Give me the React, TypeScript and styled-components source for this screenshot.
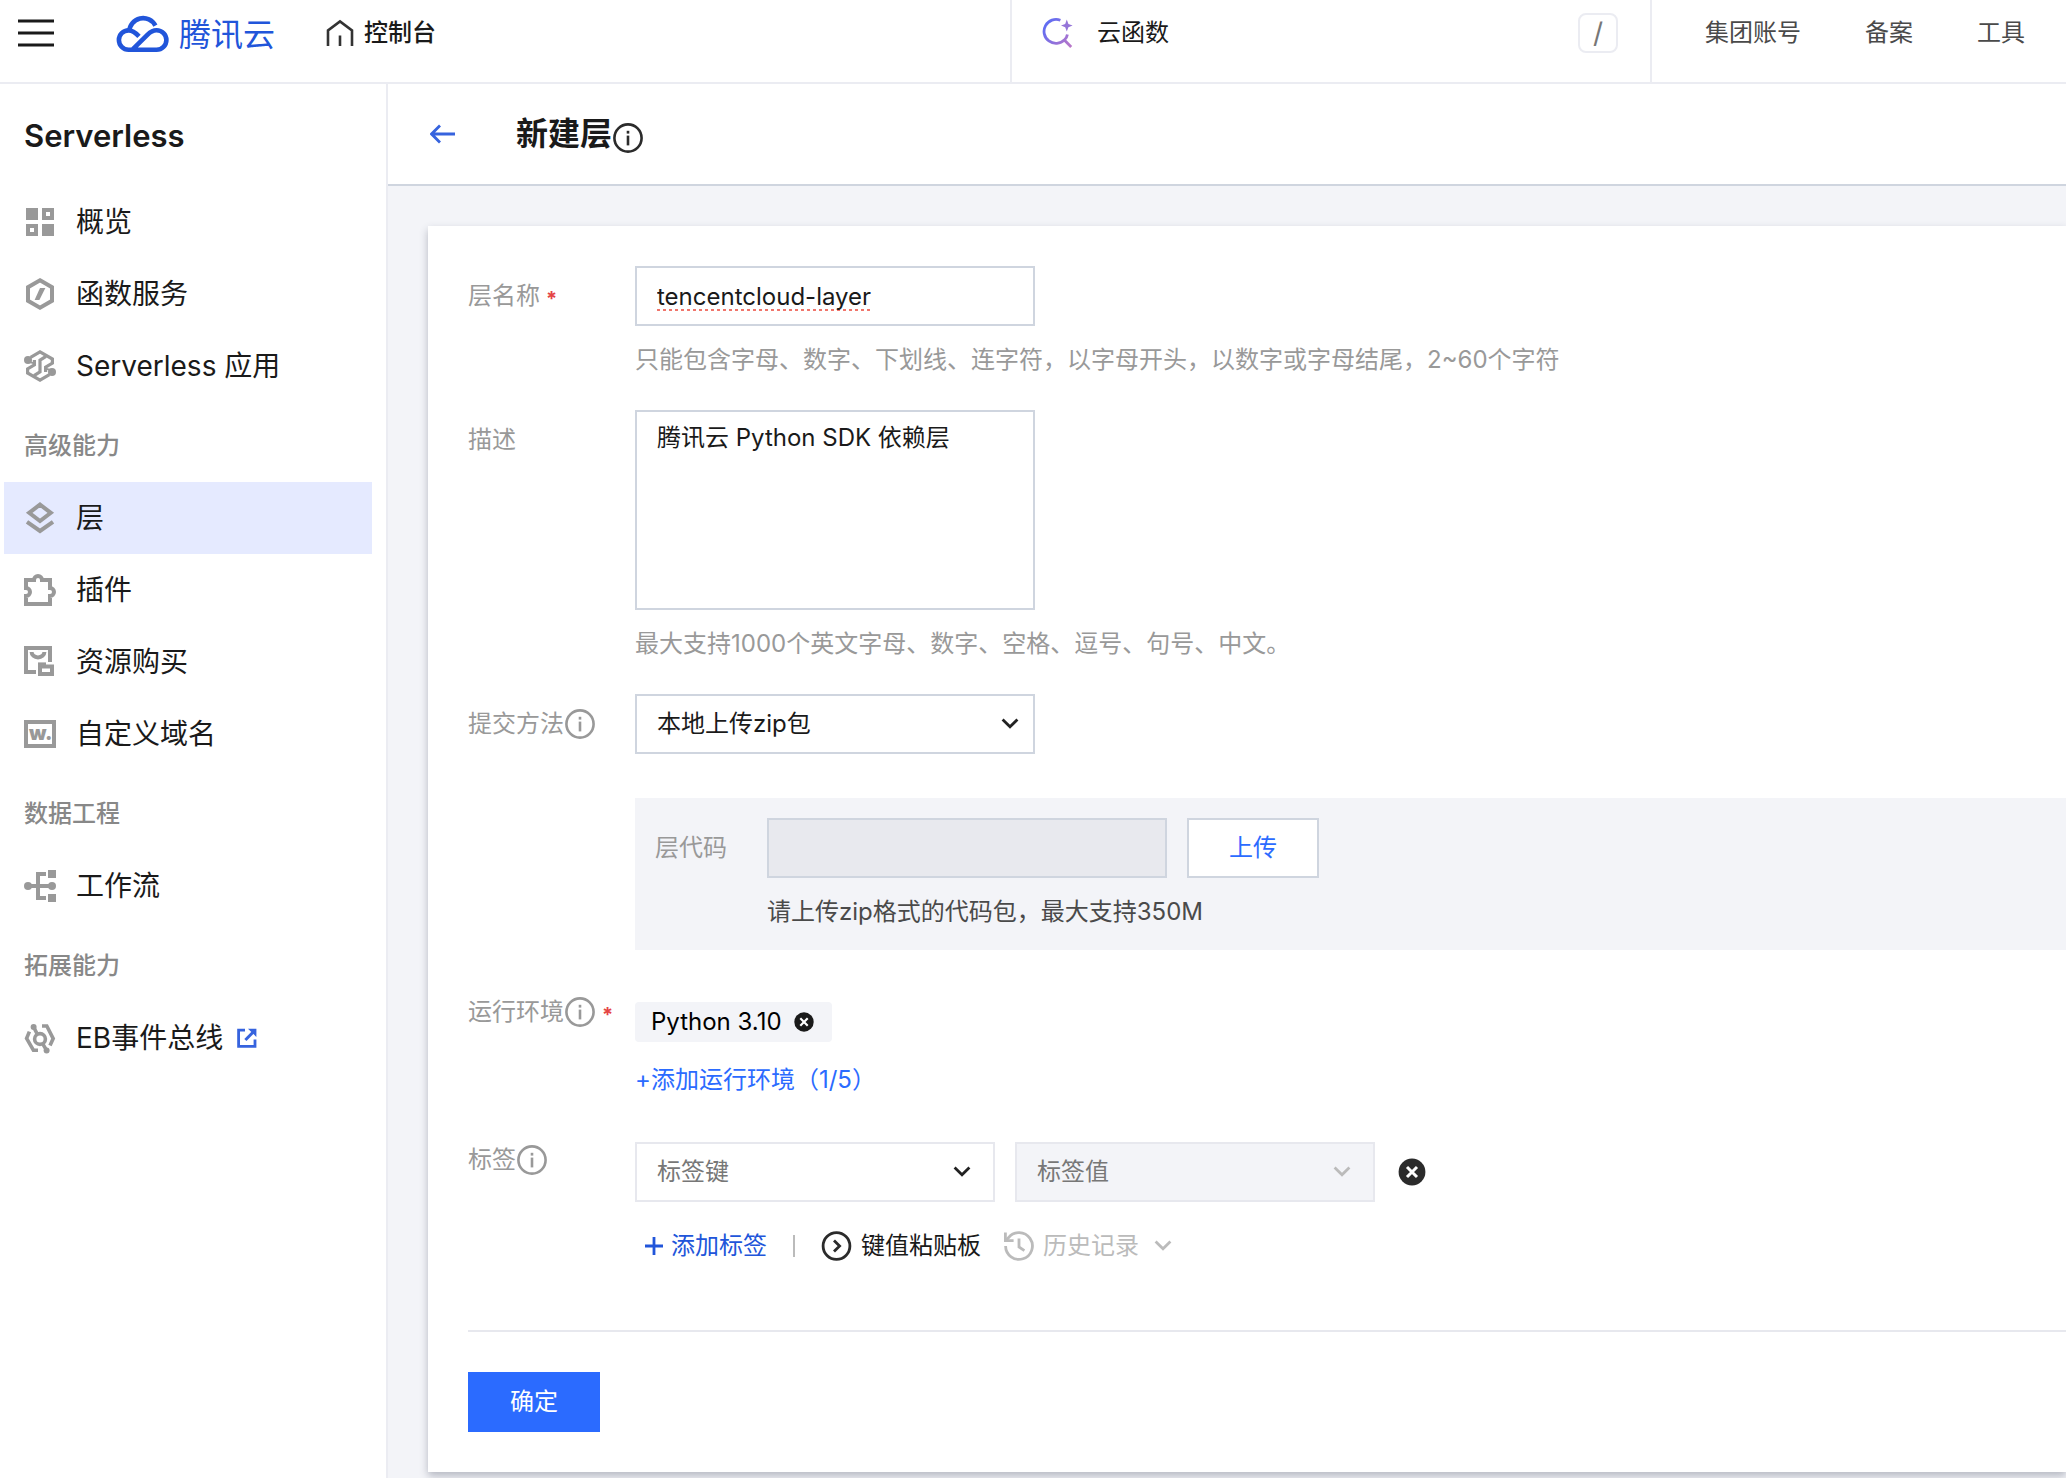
import React, { useState } from 'react';
import styled, { createGlobalStyle, css } from 'styled-components';

const color = {
  ink: '#1a1a1a',
  body: '#4a4a4a',
  label: '#999999',
  group: '#888888',
  faint: '#bbbbbb',
  blue: '#2b6bff',
  deepBlue: '#2155da',
  red: '#e54545',
  line: '#ebecf2',
  border: '#cfd5df',
  softBorder: '#e7e8ee',
  panel: '#f3f4f8',
  active: '#e5eaff',
};

const GlobalStyle = createGlobalStyle`
  * { box-sizing: border-box; }
  body {
    margin: 0;
    background: #fff;
    color: ${color.ink};
    font-family: Inter, "Noto Sans CJK SC", sans-serif;
    font-size: 24px;
    line-height: 36px;
  }
  button, input, select, textarea { font: inherit; color: inherit; margin: 0; }
  svg { display: block; flex: none; }
`;

const Page = styled.div`
  display: flex;
  flex-direction: column;
  min-height: 100vh;
`;

/* ---------- top bar ---------- */

const TopBar = styled.header`
  display: flex;
  height: 84px;
  border-bottom: 2px solid ${color.line};
`;

const Brand = styled.div`
  flex: 1;
  display: flex;
  align-items: center;
  padding: 0 0 16px 18px;
`;

const PlainButton = styled.button`
  display: inline-flex;
  align-items: center;
  padding: 0;
  border: 0;
  background: none;
  cursor: pointer;
`;

const LogoLink = styled.a`
  display: flex;
  align-items: center;
  gap: 9px;
  margin-left: 62px;
  color: ${color.deepBlue};
  font-size: 32px;
  line-height: 40px;
  text-decoration: none;
`;

const LogoText = styled.span`
  padding-top: 3px;
`;

const HomeLink = styled.a`
  display: flex;
  align-items: center;
  gap: 9px;
  margin-left: 50px;
  color: ${color.ink};
  font-weight: 500;
  text-decoration: none;
`;

const Search = styled.label`
  display: flex;
  align-items: center;
  width: 642px;
  padding: 0 32px 16px 30px;
  border: solid ${color.line};
  border-width: 0 2px;
`;

const SearchInput = styled.input`
  flex: 1;
  min-width: 0;
  margin-left: 23px;
  padding: 0;
  border: 0;
  outline: 0;
  background: none;
  &::placeholder { color: ${color.ink}; opacity: 1; }
`;

const KeyHint = styled.kbd`
  display: flex;
  align-items: center;
  justify-content: center;
  width: 40px;
  height: 40px;
  border: 2px solid ${color.line};
  border-radius: 8px;
  color: #777;
  font-family: inherit;
  font-size: 28px;
`;

const TopNav = styled.nav`
  display: flex;
  align-items: center;
  gap: 64px;
  padding: 0 41px 16px 53px;
`;

const TopLink = styled.a`
  color: ${color.body};
  text-decoration: none;
  white-space: nowrap;
`;

/* ---------- side bar ---------- */

const Body = styled.div`
  flex: 1;
  display: flex;
`;

const Sidebar = styled.aside`
  flex: none;
  width: 388px;
  border-right: 2px solid ${color.line};
`;

const SideTitle = styled.h2`
  margin: 0;
  padding: 32px 24px 30px;
  font-size: 31px;
  font-weight: 600;
  line-height: 40px;
`;

const SideGroup = styled.h3`
  margin: 0;
  padding: 26px 24px 18px;
  color: ${color.group};
  font-size: 24px;
  font-weight: 500;
  line-height: 36px;
`;

const SideLink = styled.a<{ $active?: boolean }>`
  display: flex;
  align-items: center;
  gap: 20px;
  height: 72px;
  margin: 0 14px 0 4px;
  padding-left: 20px;
  background: ${(p) => (p.$active ? color.active : 'transparent')};
  color: ${color.ink};
  font-size: 28px;
  text-decoration: none;
`;

const SideText = styled.span`
  display: flex;
  align-items: center;
  gap: 14px;
`;

/* ---------- main ---------- */

const Main = styled.main`
  flex: 1;
  min-width: 0;
  display: flex;
  flex-direction: column;
  background: ${color.panel};
`;

const PageHead = styled.div`
  display: flex;
  align-items: center;
  gap: 60px;
  height: 102px;
  padding-left: 42px;
  background: #fff;
  border-bottom: 2px solid ${color.border};
`;

const PageTitle = styled.h1`
  display: flex;
  align-items: center;
  margin: 0;
  font-size: 32px;
  font-weight: 700;
  line-height: 40px;
`;

const TitleIcon = styled.span`
  padding-top: 8px;
`;

const Card = styled.form`
  margin: 40px 0 0 40px;
  padding: 40px 0 40px 40px;
  background: #fff;
  box-shadow: 0 4px 8px rgba(54, 58, 80, 0.32);
`;

const Row = styled.div`
  display: grid;
  grid-template-columns: 167px minmax(0, 1fr);
  margin-bottom: 32px;
`;

const LabelCell = styled.div`
  display: flex;
  align-items: center;
  height: 60px;
  color: ${color.label};
`;

const Required = styled.span`
  padding: 6px 0 0 6px;
  color: ${color.red};
  font-size: 20px;
  font-weight: 700;
`;

const Cell = styled.div<{ $top?: number }>`
  display: flex;
  flex-direction: column;
  align-items: flex-start;
  padding-top: ${(p) => p.$top ?? 0}px;
`;

const Hint = styled.p<{ $dark?: boolean }>`
  margin: 16px 0 0;
  color: ${(p) => (p.$dark ? color.body : color.label)};
`;

const box = css`
  border: 2px solid ${color.border};
  border-radius: 0;
  background: #fff;
  outline: 0;
`;

const TextInput = styled.input<{ $misspelt?: boolean }>`
  ${box}
  width: 400px;
  height: 60px;
  padding: 0 20px;
  ${(p) =>
    p.$misspelt &&
    css`
      text-decoration: underline dotted #f0756b 3px;
      text-underline-offset: 4px;
      text-decoration-skip-ink: none;
    `}
  &:disabled { background: #e8e9ee; }
`;

const TextArea = styled.textarea`
  ${box}
  display: block;
  width: 400px;
  height: 200px;
  padding: 8px 20px;
  resize: none;
`;

const SelectWrap = styled.div<{ $width: number; $inset: number }>`
  display: grid;
  align-items: center;
  width: ${(p) => p.$width}px;
  & > * { grid-area: 1 / 1; }
  & > svg {
    justify-self: end;
    margin-right: ${(p) => p.$inset}px;
    pointer-events: none;
  }
`;

const Select = styled.select<{ $soft?: boolean }>`
  ${box}
  appearance: none;
  width: 100%;
  height: 60px;
  padding: 0 20px;
  opacity: 1;
  ${(p) =>
    p.$soft &&
    css`
      border-color: ${color.softBorder};
      color: #777;
    `}
  &:disabled { background: ${color.panel}; }
`;

const UploadPanel = styled.div`
  display: grid;
  grid-template-columns: 112px minmax(0, 1fr);
  align-self: stretch;
  padding: 20px;
  background: ${color.panel};
`;

const Inline = styled.div<{ $gap: number }>`
  display: flex;
  align-items: center;
  gap: ${(p) => p.$gap}px;
`;

const Button = styled.button<{ $primary?: boolean }>`
  width: 132px;
  height: 60px;
  padding: 0;
  border: 2px solid ${(p) => (p.$primary ? color.blue : color.border)};
  background: ${(p) => (p.$primary ? color.blue : '#fff')};
  color: ${(p) => (p.$primary ? '#fff' : color.blue)};
  cursor: pointer;
`;

const Tag = styled.span`
  display: inline-flex;
  align-items: center;
  gap: 12px;
  height: 40px;
  padding: 0 18px 0 16px;
  border-radius: 4px;
  background: ${color.panel};
  color: #000;
`;

const AddRuntime = styled(PlainButton)`
  margin-top: 20px;
  color: ${color.blue};
`;

const Tools = styled.div`
  display: flex;
  align-items: center;
  margin-top: 26px;
  padding-left: 8px;
`;

const ToolButton = styled(PlainButton)<{ $tone: string }>`
  gap: 8px;
  color: ${(p) => p.$tone};
`;

const Divider = styled.span`
  width: 2px;
  height: 22px;
  margin: 0 26px;
  background: ${color.faint};
`;

const HistoryButton = styled(ToolButton)`
  margin-left: 22px;
`;

const HistoryText = styled.span`
  padding-right: 4px;
`;

const Footer = styled.div`
  margin-top: 66px;
  padding-top: 40px;
  border-top: 2px solid ${color.softBorder};
`;

/* ---------- icons ---------- */

const gray = '#999999';

const InfoIcon = ({ tone = gray }: { tone?: string }) => (
  <svg width="32" height="32" viewBox="0 0 32 32" fill="none" aria-hidden="true">
    <circle cx="16" cy="16" r="13.6" stroke={tone} strokeWidth="2.6" />
    <path d="M16 13.6V23.4" stroke={tone} strokeWidth="2.6" />
    <path d="M16 8.8v2.8" stroke={tone} strokeWidth="2.6" />
  </svg>
);

const Chevron = ({ tone = '#222' }: { tone?: string }) => (
  <svg width="24" height="24" viewBox="0 0 24 24" fill="none" aria-hidden="true">
    <path d="M4.6 7.6L12 14.8 19.4 7.6" stroke={tone} strokeWidth="2.8" />
  </svg>
);

const ClearIcon = ({ size, tone }: { size: number; tone: string }) => (
  <svg width={size} height={size} viewBox="0 0 28 28" aria-hidden="true">
    <circle cx="14" cy="14" r="13.6" fill={tone} />
    <path d="M8.8 8.8l10.4 10.4M19.2 8.8L8.8 19.2" stroke="#fff" strokeWidth="3" />
  </svg>
);

const CloudLogo = () => (
  <svg width="54" height="40" viewBox="0 0 54 40" fill="none" stroke={color.deepBlue} strokeWidth="4.6" aria-hidden="true">
    <path d="M23 23.4C19.6 19.8 16.6 17.4 12.6 17.4A9.7 9.7 0 0 0 12.6 36.8H40.6A9.8 9.8 0 0 0 40.6 17.2C36.6 17.2 34.2 19 31.6 21.6L16.4 36.6" />
    <path d="M13.2 18.6A13.9 13.9 0 0 1 39.4 12.6" />
  </svg>
);

const SearchIcon = () => (
  <svg width="32" height="32" viewBox="0 0 32 32" fill="none" aria-hidden="true">
    <defs>
      <linearGradient id="searchTone" x1="2" y1="6" x2="30" y2="28" gradientUnits="userSpaceOnUse">
        <stop stopColor="#5b6cf5" />
        <stop offset="1" stopColor="#b976c8" />
      </linearGradient>
    </defs>
    <path
      d="M18.4 3.2A12 12 0 1 0 22.6 22.8C24.2 21.2 25 19.6 25.4 17.4M21.6 22.2L29.2 30"
      stroke="url(#searchTone)"
      strokeWidth="2.8"
    />
    <path d="M24.8 2.6L26.4 6.9 30.6 8.6 26.4 10.3 24.8 14.4 23.2 10.3 19 8.6 23.2 6.9Z" fill="#9575d8" />
  </svg>
);

const ExternalIcon = () => (
  <svg width="20" height="20" viewBox="0 0 20 20" fill="none" aria-hidden="true">
    <path d="M8 2.2H1.6V18.4H18V11.6" stroke="#3663de" strokeWidth="2.8" />
    <path d="M8.4 12L16 4.2" stroke="#3663de" strokeWidth="3" />
    <path d="M11 .8H19.4V9Z" fill="#3663de" />
  </svg>
);

const sideIcons: Record<string, React.ReactNode> = {
  overview: (
    <g fill={gray} fillRule="evenodd">
      <path d="M2 2h12v12H2zM18 18h12v12H18z" />
      <path d="M18 2h12v12H18zM22 6v4h4V6zM2 18h12v12H2zM6 22v4h4v-4z" />
    </g>
  ),
  fn: (
    <g>
      <path d="M16 2.3L28 9.2V22.8L16 29.7 4 22.8V9.2Z" stroke={gray} strokeWidth="4" />
      <path d="M16 10h5.4L15.4 22H10.6Z" fill={gray} />
    </g>
  ),
  app: (
    <g stroke={gray} strokeWidth="3.2">
      <circle cx="4" cy="10" r="4" fill={gray} stroke="none" />
      <circle cx="28" cy="22" r="4" fill={gray} stroke="none" />
      <path d="M6.6 7.4L16 1.9 28.4 9V13.2L21.6 17.2V22" />
      <path d="M25.4 24.6L16 30.1 3.6 23V18.8L10.4 14.8V10" />
      <path d="M4 11.6L10.4 13.4M28 20.4L21.6 18.6" strokeWidth="2" />
      <path d="M22 6.4L16 10.2V21.8L10 25.6" />
    </g>
  ),
  layer: (
    <g stroke={gray} strokeWidth="4">
      <path d="M16 2.6L26.8 10.8 16 19 5.2 10.8Z" />
      <path d="M3 19.8L16 29 29 19.8" />
    </g>
  ),
  plugin: (
    <path
      d="M10 6A4 4 0 0 1 18 6H26V14A4 4 0 0 1 26 22V30H2V22A4 4 0 0 0 2 14V6Z"
      stroke={gray}
      strokeWidth="4"
    />
  ),
  buy: (
    <g stroke={gray} strokeWidth="4">
      <path d="M26 16V2H2V26H12" />
      <path d="M7.6 6A6.4 5.4 0 0 0 20.4 6" />
      <path d="M16 20.4H28V28H16Z" />
      <path d="M14 18.4h8" />
    </g>
  ),
  domain: (
    <g>
      <path d="M2 4H30V28H2Z" stroke={gray} strokeWidth="4" />
      <text x="5" y="22" fill={gray} fontFamily="Inter, sans-serif" fontSize="20" fontWeight="900">
        w.
      </text>
    </g>
  ),
  flow: (
    <g fill={gray}>
      <circle cx="4" cy="16" r="4" />
      <circle cx="28" cy="16" r="4" />
      <path d="M24 0h8v8h-8zM24 24h8v8h-8zM4 14h24v4H4z" />
      <path d="M12 2h10v4h-6v20h6v4H12z" />
    </g>
  ),
  bus: (
    <g stroke={gray} strokeWidth="3.6">
      <circle cx="16" cy="17" r="5.4" />
      <circle cx="9.6" cy="5" r="3" fill={gray} stroke="none" />
      <circle cx="22.6" cy="28.4" r="3" fill={gray} stroke="none" />
      <path d="M9.6 5L13.4 12.4M22.6 28.4L18.6 21.6" />
      <path d="M5.4 9.6L2.6 16.4 9.4 28.2H14" />
      <path d="M18 4H22.8L29.2 16.6 26 23.6" />
    </g>
  ),
};

/* ---------- content ---------- */

type Item = { icon: string; text: string; active?: boolean; external?: boolean };

const groups: { title?: string; items: Item[] }[] = [
  {
    items: [
      { icon: 'overview', text: '概览' },
      { icon: 'fn', text: '函数服务' },
      { icon: 'app', text: 'Serverless 应用' },
    ],
  },
  {
    title: '高级能力',
    items: [
      { icon: 'layer', text: '层', active: true },
      { icon: 'plugin', text: '插件' },
      { icon: 'buy', text: '资源购买' },
      { icon: 'domain', text: '自定义域名' },
    ],
  },
  { title: '数据工程', items: [{ icon: 'flow', text: '工作流' }] },
  { title: '拓展能力', items: [{ icon: 'bus', text: 'EB事件总线', external: true }] },
];

export default function App() {
  const [name, setName] = useState('tencentcloud-layer');
  const [desc, setDesc] = useState('腾讯云 Python SDK 依赖层');

  return (
    <Page>
      <GlobalStyle />
      <TopBar>
        <Brand>
          <PlainButton type="button" aria-label="菜单">
            <svg width="36" height="28" viewBox="0 0 36 28" aria-hidden="true">
              <path d="M0 2h36M0 14h36M0 26h36" stroke={color.ink} strokeWidth="3" />
            </svg>
          </PlainButton>
          <LogoLink href="#">
            <CloudLogo />
            <LogoText>腾讯云</LogoText>
          </LogoLink>
          <HomeLink href="#">
            <svg width="30" height="28" viewBox="0 0 30 28" fill="none" aria-hidden="true">
              <path d="M3 27V11.4L15 2.4 27 11.4V27M15 16.4V27" stroke="#333" strokeWidth="2.6" />
            </svg>
            控制台
          </HomeLink>
        </Brand>
        <Search>
          <SearchIcon />
          <SearchInput type="text" placeholder="云函数" aria-label="搜索" />
          <KeyHint>/</KeyHint>
        </Search>
        <TopNav>
          <TopLink href="#">集团账号</TopLink>
          <TopLink href="#">备案</TopLink>
          <TopLink href="#">工具</TopLink>
        </TopNav>
      </TopBar>

      <Body>
        <Sidebar>
          <SideTitle>Serverless</SideTitle>
          {groups.map((group, i) => (
            <nav key={i}>
              {group.title && <SideGroup>{group.title}</SideGroup>}
              {group.items.map((item) => (
                <SideLink href="#" key={item.text} $active={item.active}>
                  <svg width="32" height="32" viewBox="0 0 32 32" fill="none" aria-hidden="true">
                    {sideIcons[item.icon]}
                  </svg>
                  <SideText>
                    {item.text}
                    {item.external && <ExternalIcon />}
                  </SideText>
                </SideLink>
              ))}
            </nav>
          ))}
        </Sidebar>

        <Main>
          <PageHead>
            <PlainButton type="button" aria-label="返回">
              <svg width="26" height="20" viewBox="0 0 26 20" fill="none" aria-hidden="true">
                <path d="M25 10H2M10 1.6L1.6 10l8.4 8.4" stroke="#3663de" strokeWidth="2.8" />
              </svg>
            </PlainButton>
            <PageTitle>
              新建层
              <TitleIcon>
                <InfoIcon tone="#2b2b2b" />
              </TitleIcon>
            </PageTitle>
          </PageHead>

          <Card onSubmit={(e) => e.preventDefault()}>
            <Row>
              <LabelCell>
                <label htmlFor="name">层名称</label>
                <Required>*</Required>
              </LabelCell>
              <Cell>
                <TextInput
                  id="name"
                  type="text"
                  $misspelt
                  spellCheck={false}
                  value={name}
                  onChange={(e) => setName(e.target.value)}
                />
                <Hint>只能包含字母、数字、下划线、连字符，以字母开头，以数字或字母结尾，2~60个字符</Hint>
              </Cell>
            </Row>

            <Row>
              <LabelCell>
                <label htmlFor="desc">描述</label>
              </LabelCell>
              <Cell>
                <TextArea id="desc" spellCheck={false} value={desc} onChange={(e) => setDesc(e.target.value)} />
                <Hint>最大支持1000个英文字母、数字、空格、逗号、句号、中文。</Hint>
              </Cell>
            </Row>

            <Row>
              <LabelCell>
                <label htmlFor="method">提交方法</label>
                <InfoIcon />
              </LabelCell>
              <Cell>
                <SelectWrap $width={400} $inset={13}>
                  <Select id="method">
                    <option>本地上传zip包</option>
                  </Select>
                  <Chevron />
                </SelectWrap>
              </Cell>
            </Row>

            <Row>
              <span />
              <Cell $top={12}>
                <UploadPanel>
                  <LabelCell>
                    <label htmlFor="code">层代码</label>
                  </LabelCell>
                  <Cell>
                    <Inline $gap={20}>
                      <TextInput id="code" type="text" disabled />
                      <Button type="button">上传</Button>
                    </Inline>
                    <Hint $dark>请上传zip格式的代码包，最大支持350M</Hint>
                  </Cell>
                </UploadPanel>
              </Cell>
            </Row>

            <Row>
              <LabelCell>
                <span>运行环境</span>
                <InfoIcon />
                <Required>*</Required>
              </LabelCell>
              <Cell $top={20}>
                <Tag>
                  Python 3.10
                  <PlainButton type="button" aria-label="移除 Python 3.10">
                    <ClearIcon size={20} tone="#1a1a1a" />
                  </PlainButton>
                </Tag>
                <AddRuntime type="button">+添加运行环境（1/5）</AddRuntime>
              </Cell>
            </Row>

            <Row>
              <LabelCell>
                <label htmlFor="tagKey">标签</label>
                <InfoIcon />
              </LabelCell>
              <Cell $top={12}>
                <Inline $gap={20}>
                  <SelectWrap $width={360} $inset={21}>
                    <Select id="tagKey" $soft>
                      <option>标签键</option>
                    </Select>
                    <Chevron />
                  </SelectWrap>
                  <SelectWrap $width={360} $inset={21}>
                    <Select aria-label="标签值" $soft disabled>
                      <option>标签值</option>
                    </Select>
                    <Chevron tone={color.faint} />
                  </SelectWrap>
                  <PlainButton type="button" aria-label="删除标签">
                    <svg width="32" height="28" viewBox="-3 0 32 28" aria-hidden="true">
                      <circle cx="14" cy="14" r="13.4" fill="#2b2b2b" />
                      <path d="M9 9l10 10M19 9L9 19" stroke="#fff" strokeWidth="3" />
                    </svg>
                  </PlainButton>
                </Inline>
                <Tools>
                  <ToolButton type="button" $tone={color.deepBlue}>
                    <svg width="20" height="20" viewBox="0 0 20 20" aria-hidden="true">
                      <path d="M11 1v18M2 10h18" stroke={color.deepBlue} strokeWidth="2.8" />
                    </svg>
                    添加标签
                  </ToolButton>
                  <Divider />
                  <ToolButton type="button" $tone={color.ink}>
                    <svg width="32" height="32" viewBox="0 0 32 32" fill="none" aria-hidden="true">
                      <circle cx="15.5" cy="16" r="13.4" stroke="#2b2b2b" strokeWidth="2.8" />
                      <path d="M13 10.4l5.6 5.6-5.6 5.6" stroke="#2b2b2b" strokeWidth="2.8" />
                    </svg>
                    键值粘贴板
                  </ToolButton>
                  <HistoryButton type="button" $tone={color.faint}>
                    <svg width="32" height="32" viewBox="0 0 32 32" fill="none" stroke={color.faint} strokeWidth="2.8" aria-hidden="true">
                      <path d="M2.6 16A13.4 13.4 0 1 0 5.4 7.8L3 10.4" />
                      <path d="M2.4 2.4V10.6H10.6" />
                      <path d="M16 8.6V17L21.4 20.6" />
                    </svg>
                    <HistoryText>历史记录</HistoryText>
                    <Chevron tone={color.faint} />
                  </HistoryButton>
                </Tools>
              </Cell>
            </Row>

            <Footer>
              <Button type="submit" $primary>
                确定
              </Button>
            </Footer>
          </Card>
        </Main>
      </Body>
    </Page>
  );
}
